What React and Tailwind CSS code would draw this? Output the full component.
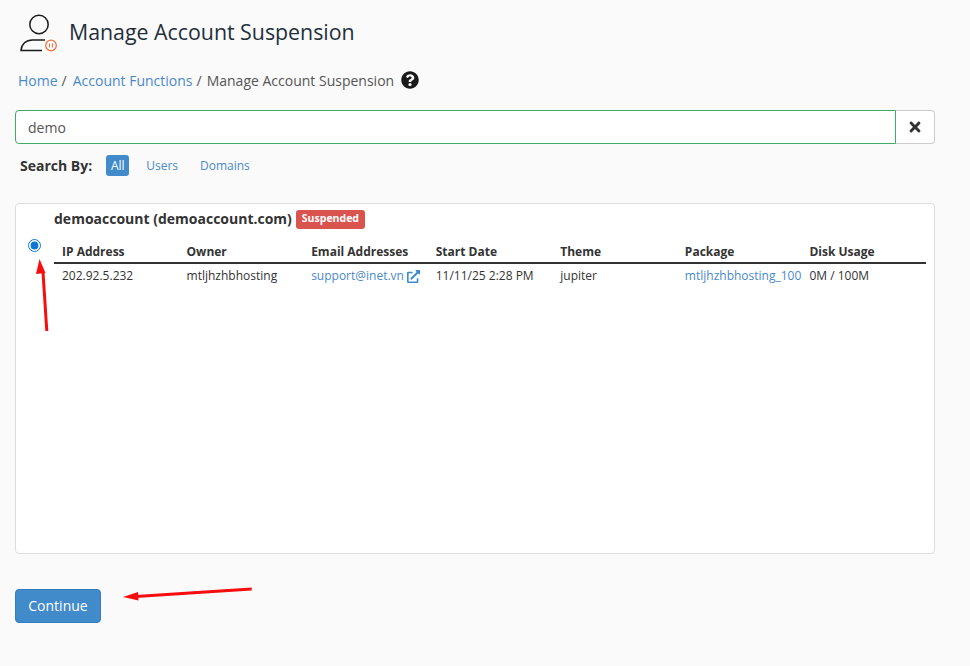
import React from "react";
import { FaQuestionCircle, FaTimes, FaExternalLinkAlt } from "react-icons/fa";

const cols = [
  ["IP Address", "202.92.5.232"],
  ["Owner", "mtljhzhbhosting"],
  ["Email Addresses", "email"],
  ["Start Date", "11/11/25 2:28 PM"],
  ["Theme", "jupiter"],
  ["Package", "link"],
  ["Disk Usage", "0M / 100M"],
];

function Cell({ value }) {
  if (value === "email") {
    return (
      <span className="flex items-center gap-[3px] text-[#4a89c8] whitespace-nowrap">
        support@inet.vn
        <FaExternalLinkAlt className="text-[#3d8bcd] w-[13px] h-[13px]" />
      </span>
    );
  }
  if (value === "link") {
    return <span className="text-[#4a89c8] whitespace-nowrap">mtljhzhbhosting_100</span>;
  }
  return <span className="whitespace-nowrap">{value}</span>;
}

export default function App() {
  return (
    <div className="relative h-[666px] w-[970px] overflow-hidden bg-[#fafafa] font-['Open_Sans',sans-serif] text-[#333]">
      <div className="w-[935px] pl-[15px] pt-[14px]">
        <header className="flex h-[40px] items-center pl-[5px]">
          <svg width="38" height="40" viewBox="0 0 38 40" fill="none" className="shrink-0">
            <circle cx="19" cy="10.5" r="9.2" stroke="#1b1b1b" strokeWidth="1.5" />
            <path d="M25 26H12.5C6 26 1.5 30 1 36.5H22" stroke="#1b1b1b" strokeWidth="1.5" />
            <circle cx="31" cy="31.5" r="5.3" stroke="#f0743e" strokeWidth="1.3" fill="#fafafa" />
            <path d="M29.5 29.5V33.5M32.5 29.5V33.5" stroke="#f0743e" strokeWidth="1.1" />
          </svg>
          <h1 className="mb-[4px] ml-[11px] text-[21.33px] leading-[30px] font-normal text-[#222f3b]">Manage Account Suspension</h1>
        </header>

        <nav className="mt-[12px] flex h-[28px] items-center pl-[3px] text-[14px]">
          <span className="text-[#4a89c8]">Home</span>
          <span className="ml-[4px] text-[#555]">/</span>
          <span className="ml-[6px] text-[#4a89c8]">Account Functions</span>
          <span className="ml-[4px] text-[#555]">/</span>
          <span className="ml-[5px] text-[#555]">Manage Account Suspension</span>
          <FaQuestionCircle className="ml-[7px] h-[18px] w-[18px] text-[#1a1a1a]" />
        </nav>

        <div className="mt-[16px] flex h-[34px] w-[920px]">
          <div className="flex flex-1 items-center rounded-l-[4px] border border-[#3eac66] bg-white pl-[12px] text-[14px] text-[#555]">
            demo
          </div>
          <button className="flex w-[39px] items-center justify-center rounded-r-[4px] border border-l-0 border-[#ccc] bg-white">
            <FaTimes className="h-[16px] w-[12px] text-[#333]" />
          </button>
        </div>

        <div className="mt-[10px] flex h-[22px] items-center pl-[5px] text-[12px]">
          <span className="text-[14px] font-bold text-[#333]">Search By:</span>
          <span className="ml-[14px] flex h-[21px] w-[23px] items-center justify-center rounded-[3px] bg-[#428bca] pt-[1px] text-white">All</span>
          <span className="ml-[17px] pt-[2px] text-[#4a89c8]">Users</span>
          <span className="ml-[22px] pt-[2px] text-[#4a89c8]">Domains</span>
        </div>

        <section className="mt-[27px] flex h-[351px] w-[920px] rounded-[4px] border border-[#ddd] bg-white">
          <div className="flex w-[38px] shrink-0 justify-center pt-[35px] pr-[2px]">
            <input type="radio" checked readOnly className="m-0 h-[13px] w-[13px] accent-[#0f78d2]" />
          </div>
          <div className="w-[872px]">
            <div className="flex h-[30px] items-center">
              <span className="mb-[2px] text-[14px] font-bold text-[#333]">demoaccount (demoaccount.com)</span>
              <span className="ml-[4px] flex h-[19px] items-center rounded-[3px] bg-[#d9534f] px-[6px] text-[10.5px] font-bold text-white">Suspended</span>
            </div>
            <div className="mt-[7px] grid grid-cols-7 border-b-2 border-[#333] text-[12px] font-bold">
              {cols.map(([h]) => (
                <div key={h} className="h-[21px] pl-[8px] leading-[21px] whitespace-nowrap">{h}</div>
              ))}
            </div>
            <div className="grid grid-cols-7 text-[12px] text-[#333]">
              {cols.map(([h, v]) => (
                <div key={h} className="flex h-[24px] items-center pl-[8px]"><Cell value={v} /></div>
              ))}
            </div>
          </div>
        </section>

        <button className="mt-[35px] h-[34px] w-[86px] rounded-[4px] border border-[#357ebd] bg-[#428bca] pb-[2px] text-[14px] text-white">
          Continue
        </button>
      </div>

      <svg className="pointer-events-none absolute left-0 top-0" width="970" height="666" fill="none">
        <path d="M46.8 331L43 272" stroke="#f70d0d" strokeWidth="3" />
        <path d="M39.5 259L36 274L45.5 273Z" fill="#f70d0d" />
        <path d="M251.7 589L136 596.5" stroke="#f70d0d" strokeWidth="3" />
        <path d="M123 597L138 592L138.5 600.5Z" fill="#f70d0d" />
      </svg>
    </div>
  );
}
